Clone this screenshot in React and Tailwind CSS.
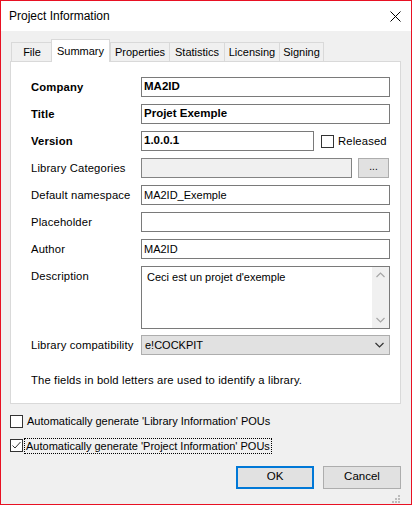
import React from 'react';

const TABS = [
  { label: 'File', w: 'w-[41px]' },
  { label: 'Summary', w: 'w-[59px]', active: true },
  { label: 'Properties', w: 'w-[59px]' },
  { label: 'Statistics', w: 'w-[55px]' },
  { label: 'Licensing', w: 'w-[55px]' },
  { label: 'Signing', w: 'w-[45px]', last: true },
];

const Label = ({ children, bold }) => (
  <div className={`w-[110px] h-[20px] flex items-center text-[11.25px] tracking-[0.15px] text-black ${bold ? 'font-bold' : ''}`}>
    {children}
  </div>
);

const Field = ({ value, bold, className = 'w-[249px]' }) => (
  <div className={`h-[20px] border border-[#7a7a7a] bg-white flex items-center px-[2px] text-black ${bold ? 'font-bold text-[11.5px]' : 'text-[11px]'} ${className}`}>
    {value}
  </div>
);

const Check = ({ checked }) => (
  <div className="w-[13px] h-[13px] border border-[#333333] bg-white flex items-center justify-center shrink-0">
    {checked && (
      <svg width="11" height="11" viewBox="0 0 11 11">
        <path d="M1.5 5.5 L4 8 L9.5 2" fill="none" stroke="#333333" strokeWidth="1" />
      </svg>
    )}
  </div>
);

const Chevron = ({ up, color = '#a6a6a6' }) => (
  <svg width="9" height="6" viewBox="0 0 9 6">
    <path d={up ? 'M0.5 5 L4.5 1 L8.5 5' : 'M0.5 1 L4.5 5 L8.5 1'} fill="none" stroke={color} strokeWidth="1.2" />
  </svg>
);

export default function App() {
  return (
    <div className="w-[412px] h-[505px] border border-[#e81123] bg-[#f0f0f0] flex flex-col font-['Liberation_Sans',Arial,sans-serif] select-none">
      {/* Title bar */}
      <div className="h-[30px] bg-white flex items-center justify-between pl-[8px] pr-[10px] shrink-0">
        <span className="text-[12px] text-black">Project Information</span>
        <svg width="11" height="11" viewBox="0 0 11 11">
          <path d="M0.5 0.5 L10.5 10.5 M10.5 0.5 L0.5 10.5" stroke="#000" strokeWidth="1" />
        </svg>
      </div>

      <div className="px-[9px] pt-[8px] flex flex-col">
        {/* Tabs */}
        <div className="flex items-end h-[23px] -mb-px relative z-10 pl-[1px]">
          {TABS.map((t) =>
            t.active ? (
              <div
                key={t.label}
                className={`${t.w} h-[23px] bg-white border border-b-0 border-[#d9d9d9] -ml-px flex items-start justify-center pt-[3px] text-[11px] text-black`}
              >
                {t.label}
              </div>
            ) : (
              <div
                key={t.label}
                className={`${t.w} h-[20px] bg-[#f0f0f0] border-t border-l border-b border-[#d9d9d9] ${t.last ? 'border-r' : ''} flex items-center justify-center pt-[1px] text-[11px] text-black`}
              >
                {t.label}
              </div>
            )
          )}
        </div>

        {/* Panel */}
        <div className="w-[391px] h-[343px] bg-white border border-[#d9d9d9] pl-[20px] pt-[15px] flex flex-col gap-[7px]">
          <div className="flex">
            <Label bold>Company</Label>
            <Field value="MA2ID" bold />
          </div>
          <div className="flex">
            <Label bold>Title</Label>
            <Field value="Projet Exemple" bold />
          </div>
          <div className="flex items-center">
            <Label bold>Version</Label>
            <Field value="1.0.0.1" bold className="w-[173px]" />
            <div className="ml-[7px] flex items-center gap-[4px]">
              <Check />
              <span className="text-[11.25px] tracking-[0.15px] text-black">Released</span>
            </div>
          </div>
          <div className="flex items-center">
            <Label>Library Categories</Label>
            <div className="w-[211px] h-[20px] border border-[#838383] bg-[#f0f0f0]" />
            <div className="ml-[6px] w-[31px] h-[20px] bg-[#e1e1e1] border border-[#adadad] flex items-center justify-center text-[10px] text-black pb-[3px]">
              ...
            </div>
          </div>
          <div className="flex">
            <Label>Default namespace</Label>
            <Field value="MA2ID_Exemple" />
          </div>
          <div className="flex">
            <Label>Placeholder</Label>
            <Field value="" />
          </div>
          <div className="flex">
            <Label>Author</Label>
            <Field value="MA2ID" />
          </div>
          <div className="flex">
            <Label>Description</Label>
            <div className="w-[249px] h-[63px] border border-[#7a7a7a] bg-white flex">
              <div className="flex-1 pl-[5px] pt-[2px] text-[11px] text-black">Ceci est un projet d'exemple</div>
              <div className="w-[17px] bg-[#f0f0f0] flex flex-col items-center justify-between py-[5px]">
                <Chevron up />
                <Chevron />
              </div>
            </div>
          </div>
          <div className="flex -mt-px">
            <Label>Library compatibility</Label>
            <div className="w-[249px] h-[20px] border border-[#adadad] bg-[#e1e1e1] flex items-center justify-between pl-[3px] pr-[5px] text-[11px] text-black">
              <span>e!COCKPIT</span>
              <Chevron color="#333333" />
            </div>
          </div>
          <div className="mt-[10px] text-[11.25px] tracking-[0.15px] text-black">
            The fields in bold letters are used to identify a library.
          </div>
        </div>

        {/* Options */}
        <div className="mt-[9px] flex items-center gap-[3px]">
          <Check />
          <span className="text-[11px] text-black px-[1px]">Automatically generate 'Library Information' POUs</span>
        </div>
        <div className="mt-[8px] flex items-center gap-[1px]">
          <Check checked />
          <span className="text-[11px] text-black border border-dotted border-black px-[1px] leading-[14px]">
            Automatically generate 'Project Information' POUs
          </span>
        </div>

        {/* Buttons */}
        <div className="mt-[12px] flex justify-end gap-[9px] pr-[1px]">
          <div className="w-[78px] h-[23px] bg-[#e1e1e1] border-2 border-[#0078d7] flex items-center justify-center text-[11.5px] text-black">
            OK
          </div>
          <div className="w-[78px] h-[23px] bg-[#e1e1e1] border border-[#adadad] flex items-center justify-center text-[11.5px] text-black">
            Cancel
          </div>
        </div>
        <div className="flex justify-end pr-[1px] mt-[6px]">
          <svg width="9" height="9" viewBox="0 0 9 9">
            {[[7, 1], [4, 4], [7, 4], [1, 7], [4, 7], [7, 7]].map(([x, y]) => (
              <rect key={`${x}-${y}`} x={x - 1} y={y - 1} width="2" height="2" fill="#bcbcbc" />
            ))}
          </svg>
        </div>
      </div>
    </div>
  );
}
